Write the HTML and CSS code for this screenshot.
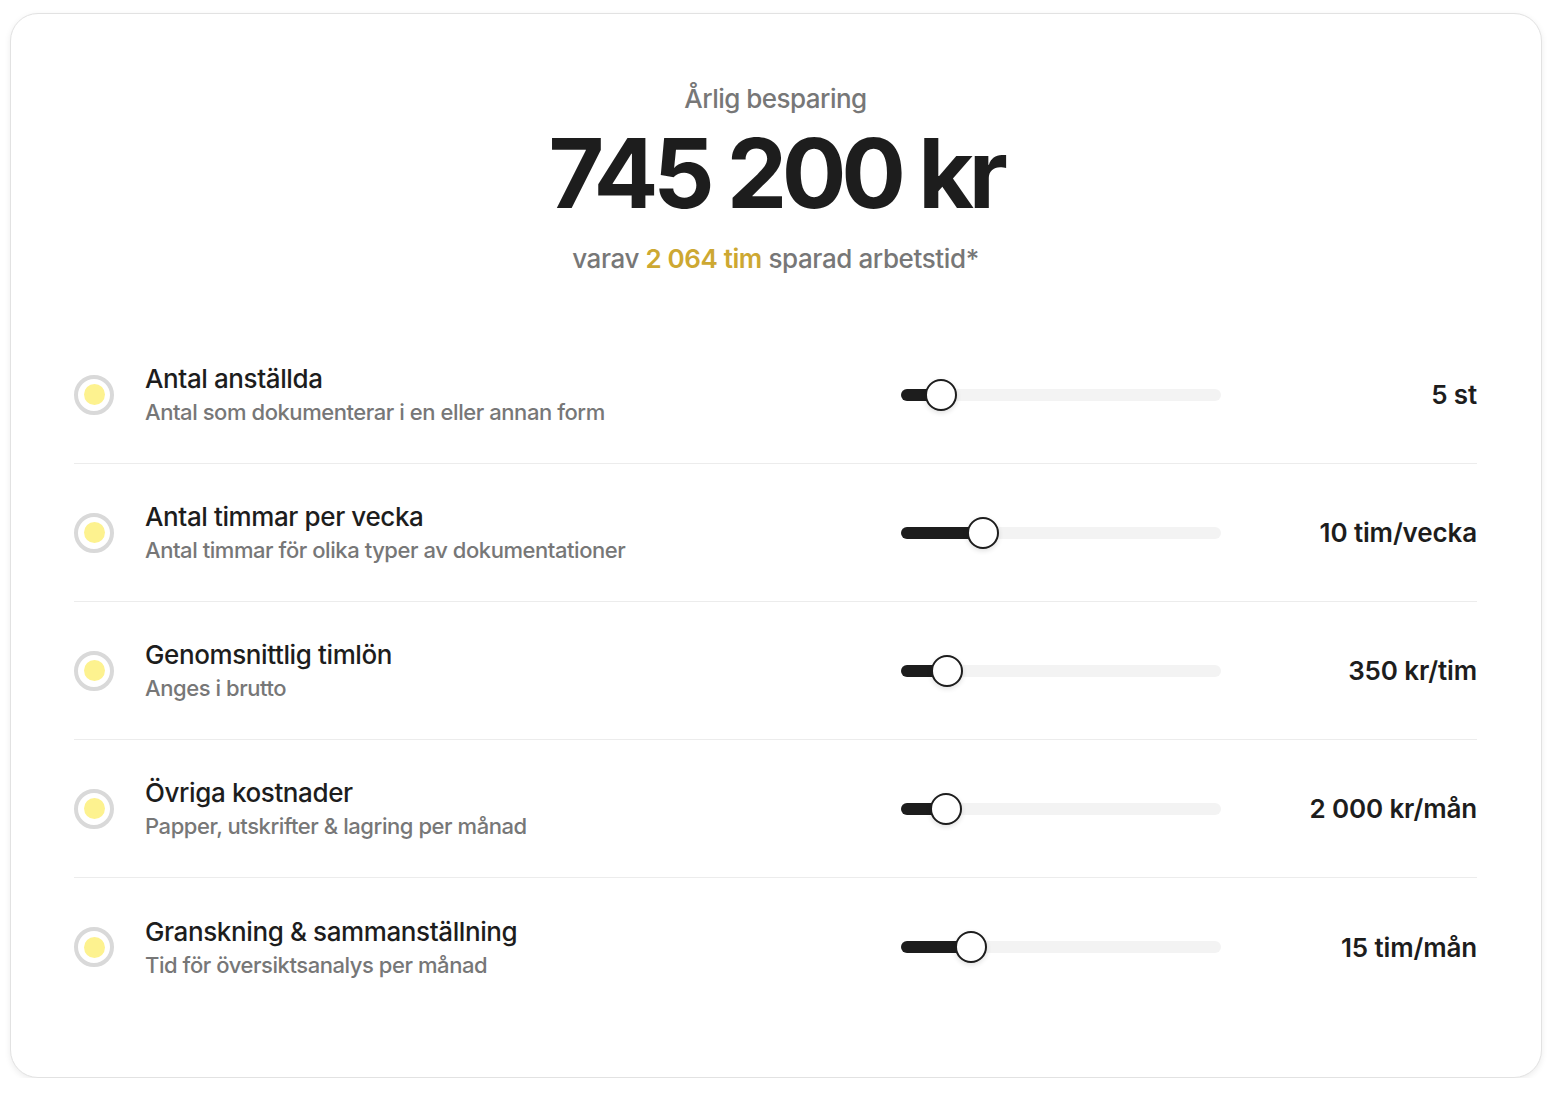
FILE: index.html
```html
<!DOCTYPE html>
<html lang="sv">

<head>
  <meta charset="UTF-8">
  <meta name="viewport" content="width=device-width, initial-scale=1.0">
  <title>Besparingskalkyl</title>
  <link rel="stylesheet" href="styles.css">
</head>

<body>
  <div class="calculator">
    <div class="summary">
      <p class="summary-label">Årlig besparing</p>
      <h1 class="summary-total">745 200 kr</h1>
      <p class="summary-note">varav <span class="hours">2 064 tim</span> sparad arbetstid*</p>
    </div>

    <div class="inputs">
      <div class="input-row">
        <span class="dot"></span>
        <div class="input-text">
          <h3>Antal anställda</h3>
          <p>Antal som dokumenterar i en eller annan form</p>
        </div>
        <div class="slider"><div class="fill" style="width: 40px"><span class="thumb"></span></div></div>
        <div class="value">5 st</div>
      </div>

      <div class="input-row">
        <span class="dot"></span>
        <div class="input-text">
          <h3>Antal timmar per vecka</h3>
          <p>Antal timmar för olika typer av dokumentationer</p>
        </div>
        <div class="slider"><div class="fill" style="width: 82px"><span class="thumb"></span></div></div>
        <div class="value">10 tim/vecka</div>
      </div>

      <div class="input-row">
        <span class="dot"></span>
        <div class="input-text">
          <h3>Genomsnittlig timlön</h3>
          <p>Anges i brutto</p>
        </div>
        <div class="slider"><div class="fill" style="width: 46px"><span class="thumb"></span></div></div>
        <div class="value">350 kr/tim</div>
      </div>

      <div class="input-row">
        <span class="dot"></span>
        <div class="input-text">
          <h3>Övriga kostnader</h3>
          <p>Papper, utskrifter &amp; lagring per månad</p>
        </div>
        <div class="slider"><div class="fill" style="width: 45px"><span class="thumb"></span></div></div>
        <div class="value">2 000 kr/mån</div>
      </div>

      <div class="input-row">
        <span class="dot"></span>
        <div class="input-text">
          <h3>Granskning &amp; sammanställning</h3>
          <p>Tid för översiktsanalys per månad</p>
        </div>
        <div class="slider"><div class="fill" style="width: 70px"><span class="thumb"></span></div></div>
        <div class="value">15 tim/mån</div>
      </div>
    </div>
  </div>
</body>

</html>
```

FILE: styles.css
```css
body {
  margin: 0;
  font-family: Inter, 'Noto Sans', sans-serif;
  background: #fff;
  color: #1d1d1d;
}

.calculator {
  margin: 13px 14px 0 10px;
  height: 1065px;
  box-sizing: border-box;
  padding: 68px 64px 0 63px;
  background: #fff;
  border: 1.5px solid #e2e2e2;
  border-radius: 28px;
  box-shadow: 0 2px 6px rgba(0, 0, 0, 0.08);
}

.summary {
  text-align: center;
}

.summary-label {
  margin: 0;
  font-size: 26px;
  line-height: 34px;
  font-weight: 500;
  color: #777;
  letter-spacing: -0.02em;
}

.summary-total {
  margin: 0;
  font-size: 96px;
  line-height: 114px;
  font-weight: 700;
  letter-spacing: -0.055em;
  color: #1d1d1d;
}

.summary-note {
  margin: 12px 0 0;
  font-size: 26px;
  line-height: 34px;
  font-weight: 500;
  color: #777;
  letter-spacing: -0.015em;
}

.summary-note .hours {
  color: #cda832;
  font-weight: 600;
}

.inputs {
  margin-top: 50px;
}

.input-row {
  display: grid;
  grid-template-columns: 72px 1fr 320px 256px;
  align-items: center;
  height: 138px;
  border-bottom: 1.5px solid #ececec;
  box-sizing: border-box;
}

.input-row:last-child {
  border-bottom: none;
}

.dot {
  width: 40px;
  height: 40px;
  box-sizing: border-box;
  border: 4px solid #d9d9d9;
  border-radius: 50%;
  display: flex;
  align-items: center;
  justify-content: center;
}

.dot::after {
  content: "";
  width: 21px;
  height: 21px;
  border-radius: 50%;
  background: #fdf28f;
}

.input-text h3 {
  margin: 0 0 0 -1px;
  font-size: 26px;
  line-height: 32px;
  font-weight: 500;
  letter-spacing: -0.015em;
}

.input-text p {
  margin: 3px 0 0 -1px;
  font-size: 22px;
  line-height: 28px;
  font-weight: 500;
  color: #777;
  letter-spacing: -0.02em;
}

.slider {
  height: 12px;
  border-radius: 6px;
  background: #f3f3f3;
}

.fill {
  position: relative;
  height: 100%;
  border-radius: 6px;
  background: #1d1d1d;
}

.thumb {
  position: absolute;
  right: -16px;
  top: 50%;
  width: 32px;
  height: 32px;
  margin-top: -16px;
  box-sizing: border-box;
  border: 2px solid #1d1d1d;
  border-radius: 50%;
  background: #fff;
  box-shadow: 0 2px 5px rgba(0, 0, 0, 0.12);
}

.value {
  text-align: right;
  font-size: 26px;
  font-weight: 600;
  letter-spacing: -0.005em;
}
```
